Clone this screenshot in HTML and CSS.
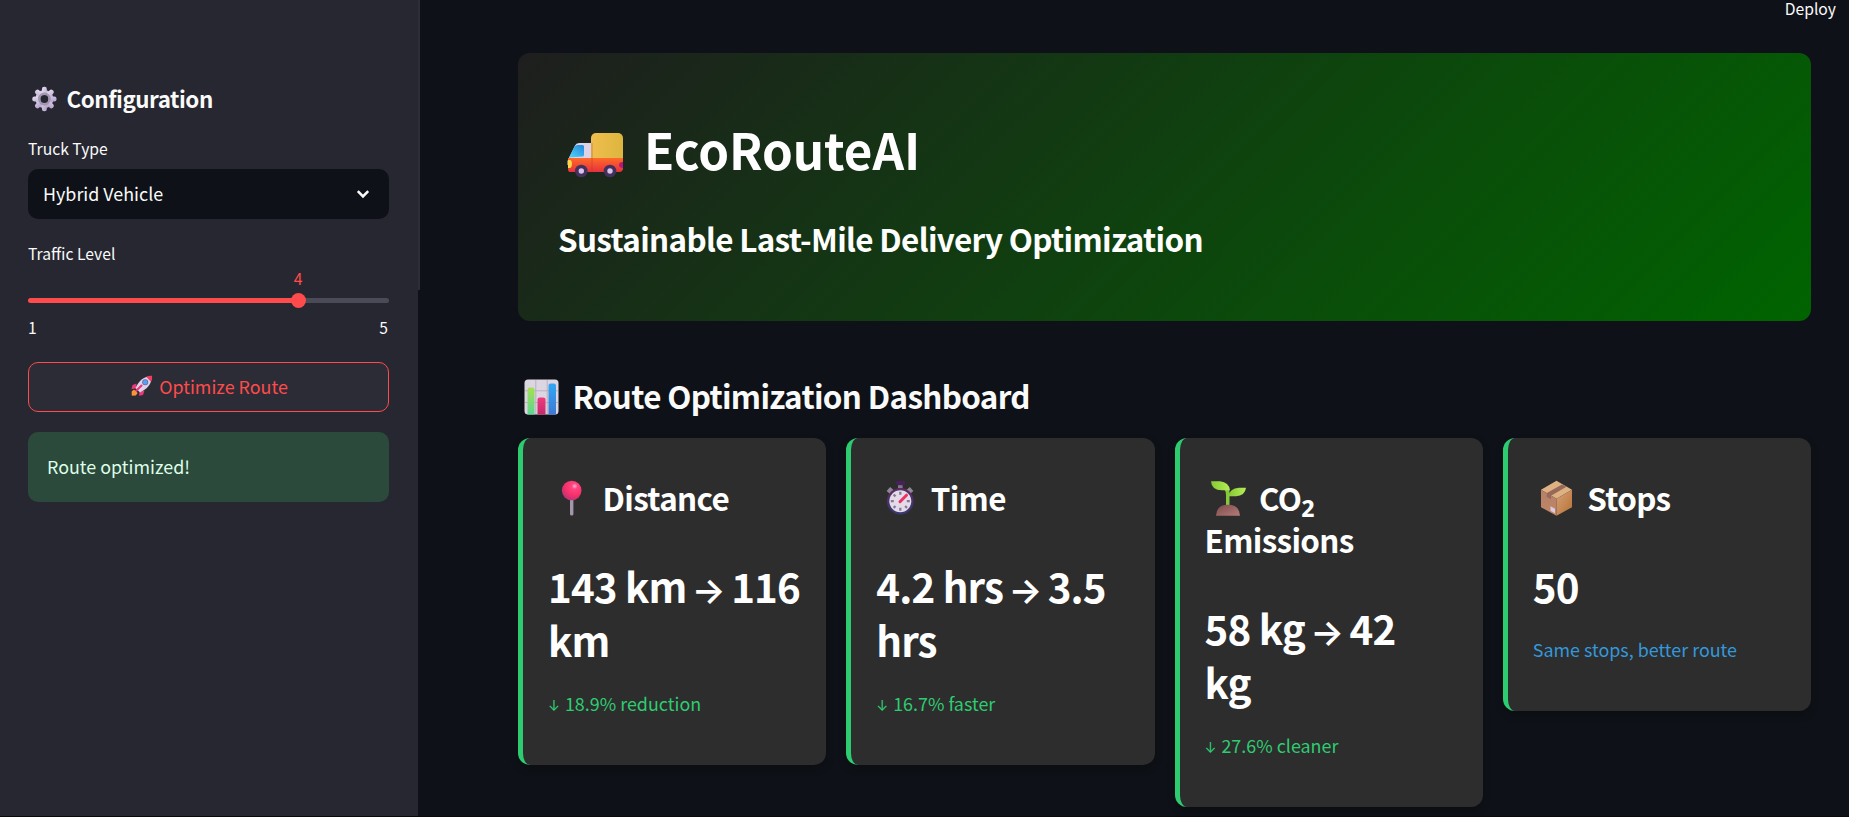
FILE: index.html
```html
<!DOCTYPE html>
<html lang="en">
<head>
<meta charset="utf-8">
<title>EcoRouteAI</title>
<link rel="stylesheet" href="styles.css">
</head>
<body>
<svg width="0" height="0" class="defs" aria-hidden="true">
  <defs>
    <linearGradient id="gLilac" x1="0" y1="0" x2="1" y2="1"><stop offset="0" stop-color="#e4dcee"/><stop offset="1" stop-color="#b4a0cc"/></linearGradient>
    <linearGradient id="gOrange" x1="0" y1="0" x2="0" y2="1"><stop offset="0" stop-color="#ff6a28"/><stop offset="1" stop-color="#e6303f"/></linearGradient>
    <linearGradient id="gBox" x1="0" y1="0" x2="1" y2="0"><stop offset="0" stop-color="#f0bd4e"/><stop offset="1" stop-color="#dcb63e"/></linearGradient>
    <linearGradient id="gSky" x1="1" y1="0" x2="0" y2="1"><stop offset="0" stop-color="#2385dc"/><stop offset="1" stop-color="#4fd6f8"/></linearGradient>
    <linearGradient id="gBar1" x1="0" y1="0" x2="0" y2="1"><stop offset="0" stop-color="#a5e052"/><stop offset="1" stop-color="#5cd690"/></linearGradient>
    <linearGradient id="gBar2" x1="0" y1="0" x2="0" y2="1"><stop offset="0" stop-color="#f03a80"/><stop offset="1" stop-color="#c52a68"/></linearGradient>
    <linearGradient id="gBar3" x1="0" y1="0" x2="0" y2="1"><stop offset="0" stop-color="#30a8f4"/><stop offset="1" stop-color="#3f78d2"/></linearGradient>
    <radialGradient id="gPin" cx=".65" cy=".28" r=".75"><stop offset="0" stop-color="#ffb0d0"/><stop offset=".2" stop-color="#ff4580"/><stop offset=".65" stop-color="#f4306a"/><stop offset="1" stop-color="#b83478"/></radialGradient>
    <linearGradient id="gWatch" x1="0" y1="0" x2="0" y2="1"><stop offset="0" stop-color="#5e2a62"/><stop offset="1" stop-color="#373874"/></linearGradient>
    <linearGradient id="gLeaf" x1="0" y1="0" x2="1" y2="0"><stop offset="0" stop-color="#86c832"/><stop offset="1" stop-color="#b4ee58"/></linearGradient>
    <linearGradient id="gSoil" x1="0" y1="0" x2="1" y2="1"><stop offset="0" stop-color="#7c4a4c"/><stop offset="1" stop-color="#b47c78"/></linearGradient>
    <linearGradient id="gCartonL" x1="0" y1="0" x2="0" y2="1"><stop offset="0" stop-color="#b5806a"/><stop offset="1" stop-color="#c08764"/></linearGradient>
    <linearGradient id="gCartonR" x1="0" y1="0" x2="1" y2="1"><stop offset="0" stop-color="#d6a078"/><stop offset="1" stop-color="#b87234"/></linearGradient>
  </defs>
</svg>
<div class="app">
  <aside class="sidebar">
    <h2 class="side-title"><svg class="gear" viewBox="0 0 39 30"><g fill="url(#gLilac)"><circle cx="16.600" cy="15" r="9.200"/><g id="teeth"><rect x="14.100" y="2.700" width="5" height="24.600" rx="2.200"/><rect x="4.300" y="12.500" width="24.600" height="5" rx="2.200"/></g><use href="#teeth" transform="rotate(45 16.600 15)"/></g><circle cx="16.600" cy="15" r="5.400" fill="none" stroke="#a197ac" stroke-width="2.200"/><circle cx="16.600" cy="15" r="4" fill="#272731"/></svg>Configuration</h2>
    <div class="label truck-label">Truck Type</div>
    <div class="select"><span>Hybrid Vehicle</span><svg class="chevron" viewBox="0 0 14 10"><path d="M1.800 2.200 7 7.400 12.200 2.200" fill="none" stroke="#fafafa" stroke-width="2.600"/></svg></div>
    <div class="label traffic-label">Traffic Level</div>
    <div class="slider">
      <div class="slider-value"><span>4</span></div>
      <div class="track"><i class="thumb"></i></div>
      <div class="ticks"><span>1</span><span>5</span></div>
    </div>
    <button class="optimize"><svg class="rocket" viewBox="0 0 22 22"><path d="M5.500 8.500 1.500 10 .5 14 5 13.500ZM13.500 15.500 12 20 8 20.700 8.500 17Z" fill="#ef3678"/><path d="M20.500 1.500C13 1 8 5.500 4.500 13L9 17.500C16 14 21 9 20.500 1.500Z" fill="#ddd2e8"/><path d="M21 .8C18.800.6 16.800 1 15.200 1.800L20 6.800C21 5 21.300 3 21 .8Z" fill="#f23c62"/><circle cx="14.200" cy="7.300" r="3" fill="#7460a8"/><circle cx="14.200" cy="7.300" r="2.200" fill="#4ea7f4"/><path d="M10.500 10.500 5 16" stroke="#f0307a" stroke-width="2" stroke-linecap="round"/><path d="M3 14.500.6 16.500.8 20.700 4.800 20.400 6.700 18Z" fill="#f99438"/></svg><span>Optimize Route</span></button>
    <div class="alert">Route optimized!</div>
  </aside>
  <div class="edge"></div>
  <div class="content">
    <header class="toolbar">Deploy</header>
    <main class="main">
      <section class="hero">
        <h1 class="hero-title"><svg class="truck" viewBox="0 0 86 66"><path d="M9.500 40V36L17 20.500Q18 18 21 18H34V40Z" fill="#ddd3e8"/><path d="M11 32.500 16.500 21.500Q17.500 20 19.500 20H24.500Q26 20 26 21.500V30Q26 31.500 24.500 31.500Z" fill="url(#gSky)"/><rect x="33" y="8" width="32" height="30" rx="5" fill="url(#gBox)"/><path d="M10 33H65V43Q65 47 61 47H12Q10 47 10 44Z" fill="url(#gOrange)"/><path d="M10 35H12.500Q14 36 14 39T12 43H10Z" fill="#ffda42"/><path d="M65 37Q61 37 61 40T65 43Z" fill="#b3187c"/><path d="M34 18V46" stroke="#9e3d26" stroke-opacity=".4"/><g fill="#44305c"><circle cx="23.300" cy="46" r="6.300"/><circle cx="52" cy="46" r="6.300"/></g><g fill="#d8c4ec"><circle cx="23.300" cy="46" r="2.700"/><circle cx="52" cy="46" r="2.700"/></g></svg>EcoRouteAI</h1>
        <h3 class="hero-sub">Sustainable Last-Mile Delivery Optimization</h3>
      </section>
      <h2 class="section-title"><svg class="icon" viewBox="0 0 54.500 42"><g transform="translate(.5 0)"><rect x="6" y="4.500" width="34" height="35" rx="3.500" fill="#dcd6e2"/><path d="M17.300 5V39M28.700 5V39M6.500 15.800H39.500M6.500 27.500H39.500" stroke="#b8b0c0"/><path d="M9 39.500V14.500Q9 12.500 11 12.500H14Q16 12.500 16 14.500V39.500Z" fill="url(#gBar1)"/><path d="M19 39.500V24.500Q19 22.500 21 22.500H25Q27 22.500 27 24.500V39.500Z" fill="url(#gBar2)"/><path d="M30 39.500V10.500Q30 8.500 32 8.500H35.500Q37.500 8.500 37.500 10.500V39.500Z" fill="url(#gBar3)"/></g></svg>Route Optimization Dashboard</h2>
      <section class="cards">
        <article class="card">
          <h3 class="card-title"><svg class="icon" viewBox="0 0 54.500 42"><rect x="22" y="21" width="3.400" height="17.500" rx="1.500" fill="#a295ac"/><circle cx="23.700" cy="13.500" r="9.800" fill="url(#gPin)"/></svg>Distance</h3>
          <p class="value">143 km <span class="arrow">→</span> 116 km</p>
          <p class="delta"><span class="arrow">↓</span> 18.9% reduction</p>
        </article>
        <article class="card">
          <h3 class="card-title"><svg class="icon" viewBox="0 0 54.500 42"><g transform="translate(0 -.8)"><path d="M12.500 16.500 16 12.500M35.500 16.500 32 12.500" stroke="#8e8794" stroke-width="5"/><rect x="22" y="7" width="4.600" height="5" fill="#827a8c"/><rect x="20" y="4.500" width="9" height="4.500" rx="1" fill="#452357"/><circle cx="24.300" cy="25" r="13.300" fill="url(#gWatch)"/><circle cx="24.300" cy="25" r="11" fill="#e3dbea"/><g stroke="#877a92" stroke-width="2.300"><path d="M24.300 15.500V18.500M24.300 31.500V34.500M14.800 25H17.800M30.800 25H33.800M17.600 18.300 19.500 20.200M29.100 29.800 31 31.700M17.600 31.700 19.500 29.800"/></g><path d="M24 25.500 30.500 19" stroke="#ee2f62" stroke-width="3" stroke-linecap="round"/></g></svg>Time</h3>
          <p class="value">4.2 hrs <span class="arrow">→</span> 3.5 hrs</p>
          <p class="delta"><span class="arrow">↓</span> 16.7% faster</p>
        </article>
        <article class="card">
          <h3 class="card-title"><svg class="icon" viewBox="0 0 54.500 42"><g transform="translate(0 -.8)"><path d="M21 29V19Q21 11 13 9.500L15 8Q24 10 24.500 16V29Z" fill="#85c83c"/><path d="M6 5H15Q24 6 25 14H17Q6.500 14 6 5Z" fill="url(#gLeaf)"/><path d="M41 11.500H34Q24.500 12 23.500 20H31Q40 19.500 41 11.500Z" fill="url(#gLeaf)"/><path d="M11 39.500Q11.500 28.500 23 28.500T35 39.500Z" fill="url(#gSoil)"/></g></svg>CO<span class="sub">₂</span> Emissions</h3>
          <p class="value">58 kg <span class="arrow">→</span> 42<br>kg</p>
          <p class="delta"><span class="arrow">↓</span> 27.6% cleaner</p>
        </article>
        <article class="card">
          <h3 class="card-title"><svg class="icon" viewBox="0 0 54.500 42"><g transform="translate(2 -.8)"><path d="M21.500 4.500 37 13.500 21.500 22.500 6 13.500Z" fill="#deb182"/><path d="M6 13.500 21.500 22.500V39.500L6 31Z" fill="url(#gCartonL)"/><path d="M37 13.500 21.500 22.500V39.500L37 31Z" fill="url(#gCartonR)"/><path d="M11.800 16.900 27 8.200 31.500 10.500 16 19.500V23L11.800 20.700Z" fill="#98695a"/><path d="M15.500 30 20 32.500V37L15.500 34.500Z" fill="#dccbe6"/></g></svg>Stops</h3>
          <p class="value">50</p>
          <p class="delta info">Same stops, better route</p>
        </article>
      </section>
    </main>
  </div>
</div>
</body>
</html>
```

FILE: styles.css
```css
* { box-sizing: border-box; margin: 0; padding: 0; }
body {
  height: 817px;
  overflow: hidden;
  background: #0e1117;
  color: #fafafa;
  font: 400 17.9px/32px "Noto Sans CJK SC", "Noto Sans", sans-serif;
}
.defs { position: absolute; }
.app { display: flex; height: 817px; border-bottom: 1px solid #08090c; }

.sidebar { width: 418px; padding: 83px 29px 0 28px; background: #262730; }
.edge { width: 2px; height: 290px; background: #2c2d37; }
.side-title { display: flex; height: 30px; font-size: 22.4px; line-height: 30px; font-weight: 600; letter-spacing: -0.46px; }
.gear { width: 38.5px; height: 30px; margin-top: 1px; }
.label { font-size: 15.7px; line-height: 24px; }
.truck-label { margin-top: 24px; }
.select {
  display: flex; align-items: center; justify-content: space-between;
  height: 50px; margin-top: 8px; padding: 0 19px 2px 15px;
  border-radius: 10px; background: #0e1117;
}
.chevron { width: 14px; height: 10px; margin-top: 2px; }
.traffic-label { margin-top: 23px; }
.slider-value { width: 270px; height: 32px; padding-top: 1px; line-height: 24px; font-size: 15.7px; color: #ff4b4b; display: flex; justify-content: flex-end; }
.slider-value span { width: 0; display: flex; justify-content: center; }
.track {
  display: flex; align-items: center; height: 5px; border-radius: 3px;
  background: linear-gradient(to right, #ff4b4b 75%, #4a4b56 75%);
}
.thumb { width: 15px; height: 15px; margin-left: 263px; border-radius: 50%; background: #ff4b4b; flex: none; }
.ticks { display: flex; justify-content: space-between; margin-top: 13px; padding-right: 1px; font-size: 15.7px; line-height: 24px; }
.optimize {
  display: flex; align-items: center; justify-content: center;
  width: 361px; height: 50px; margin-top: 22px; padding: 0 0 2px 2px;
  border: 1px solid #ff4b4b; border-radius: 10px; background: #2b2c36;
  color: #ff4b4b; font: inherit;
}
.rocket { width: 22px; height: 22px; margin-right: 6px; }
.alert { height: 70px; margin-top: 20px; padding: 18px 19px; border-radius: 10px; background: #2b4a3b; color: #dffde9; }

.content { flex: 1; }
.toolbar { height: 53px; padding-right: 13px; text-align: right; font-size: 15.7px; line-height: 17px; }
.main { width: 1293px; margin-left: 98px; }
.hero {
  height: 268px; padding: 63px 40px 0; border-radius: 12px; color: #fff;
  background: linear-gradient(135deg, #1e1e1e, #006400);
}
.hero-title { display: flex; height: 66px; font-size: 49.3px; line-height: 66px; font-weight: 700; letter-spacing: -0.05px; }
.truck { width: 86px; height: 66px; margin-top: 9px; }
.hero-sub { margin-top: 36px; font-size: 31.4px; line-height: 42px; font-weight: 600; letter-spacing: -0.66px; }
.section-title { display: flex; margin-top: 54px; font-size: 31.4px; line-height: 42px; font-weight: 600; letter-spacing: -0.66px; }
.icon { width: 54.5px; height: 42px; vertical-align: top; }
.cards { display: grid; grid-template-columns: repeat(4, 1fr); gap: 20px; align-items: start; margin-top: 21px; }
.card {
  padding: 39px 24px 46px 25px; border-left: 5px solid #2ecc71; border-radius: 12px;
  background: #2d2d2d; color: #fff; box-shadow: 0 4px 8px rgba(0, 0, 0, .2);
}
.card-title { font-size: 31.4px; line-height: 42px; font-weight: 600; letter-spacing: -0.66px; }
.sub { font-size: 1.2em; line-height: 0; vertical-align: -1px; }
.value { margin-top: 40px; font-size: 40.3px; line-height: 54px; font-weight: 600; letter-spacing: -0.85px; }
.delta { margin-top: 20px; color: #2ecc71; }
.info { color: #3498db; }
.arrow { font-family: Inter, sans-serif; font-size: .8em; line-height: 0; }
.value .arrow { margin: 0 -2px 0 -3px; font-size: .88em; }
.delta .arrow { margin-right: 1px; }
```
